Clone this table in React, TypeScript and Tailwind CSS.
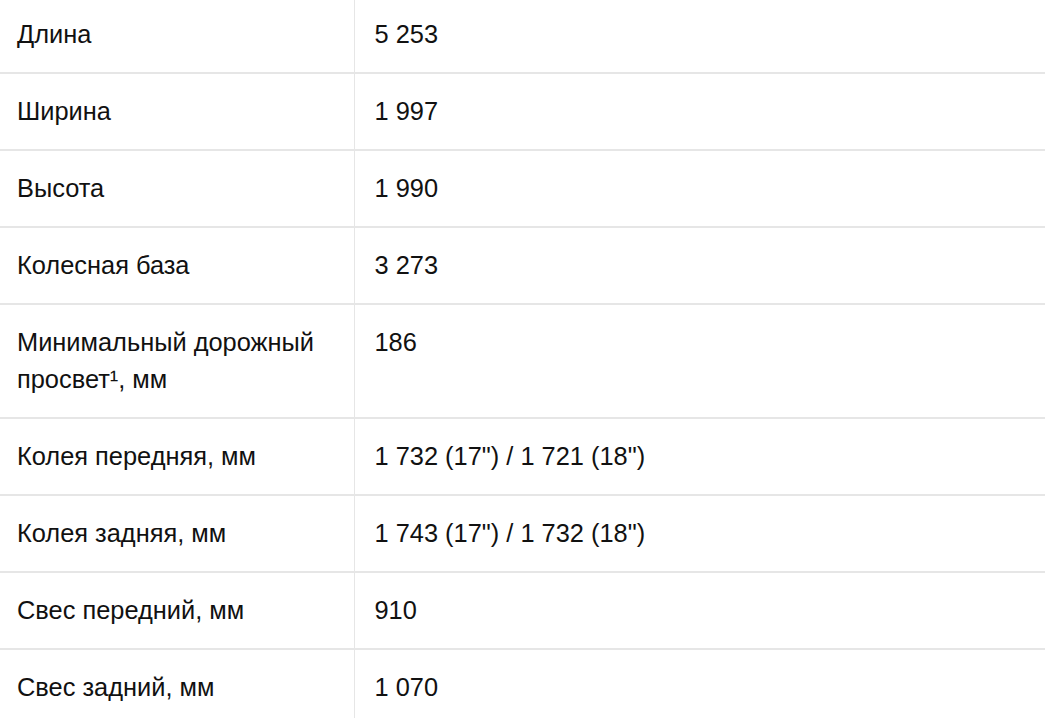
import React from "react";

const rows: { label: React.ReactNode; value: string }[] = [
  { label: "Длина", value: "5 253" },
  { label: "Ширина", value: "1 997" },
  { label: "Высота", value: "1 990" },
  { label: "Колесная база", value: "3 273" },
  {
    label: (
      <>
        Минимальный дорожный
        <br />
        просвет¹, мм
      </>
    ),
    value: "186",
  },
  { label: "Колея передняя, мм", value: '1 732 (17") / 1 721 (18")' },
  { label: "Колея задняя, мм", value: '1 743 (17") / 1 732 (18")' },
  { label: "Свес передний, мм", value: "910" },
  { label: "Свес задний, мм", value: "1 070" },
];

export default function App() {
  return (
    <div className="w-[1045px] h-[718px] overflow-hidden bg-white text-[#111] font-['Liberation_Sans',Arial,sans-serif]">
      <table className="w-full border-collapse -mt-[3px] text-[25.4px] leading-[37px]">
        <tbody>
          {rows.map((row, i) => (
            <tr
              key={i}
              className={i < rows.length - 1 ? "border-b-2 border-[#e6e6e6]" : ""}
            >
              <td className="w-[354px] align-top pl-[17px] pr-4 py-[19px] border-r border-[#e6e6e6]">
                {row.label}
              </td>
              <td className="align-top pl-[20px] pr-4 py-[19px]">{row.value}</td>
            </tr>
          ))}
        </tbody>
      </table>
    </div>
  );
}
